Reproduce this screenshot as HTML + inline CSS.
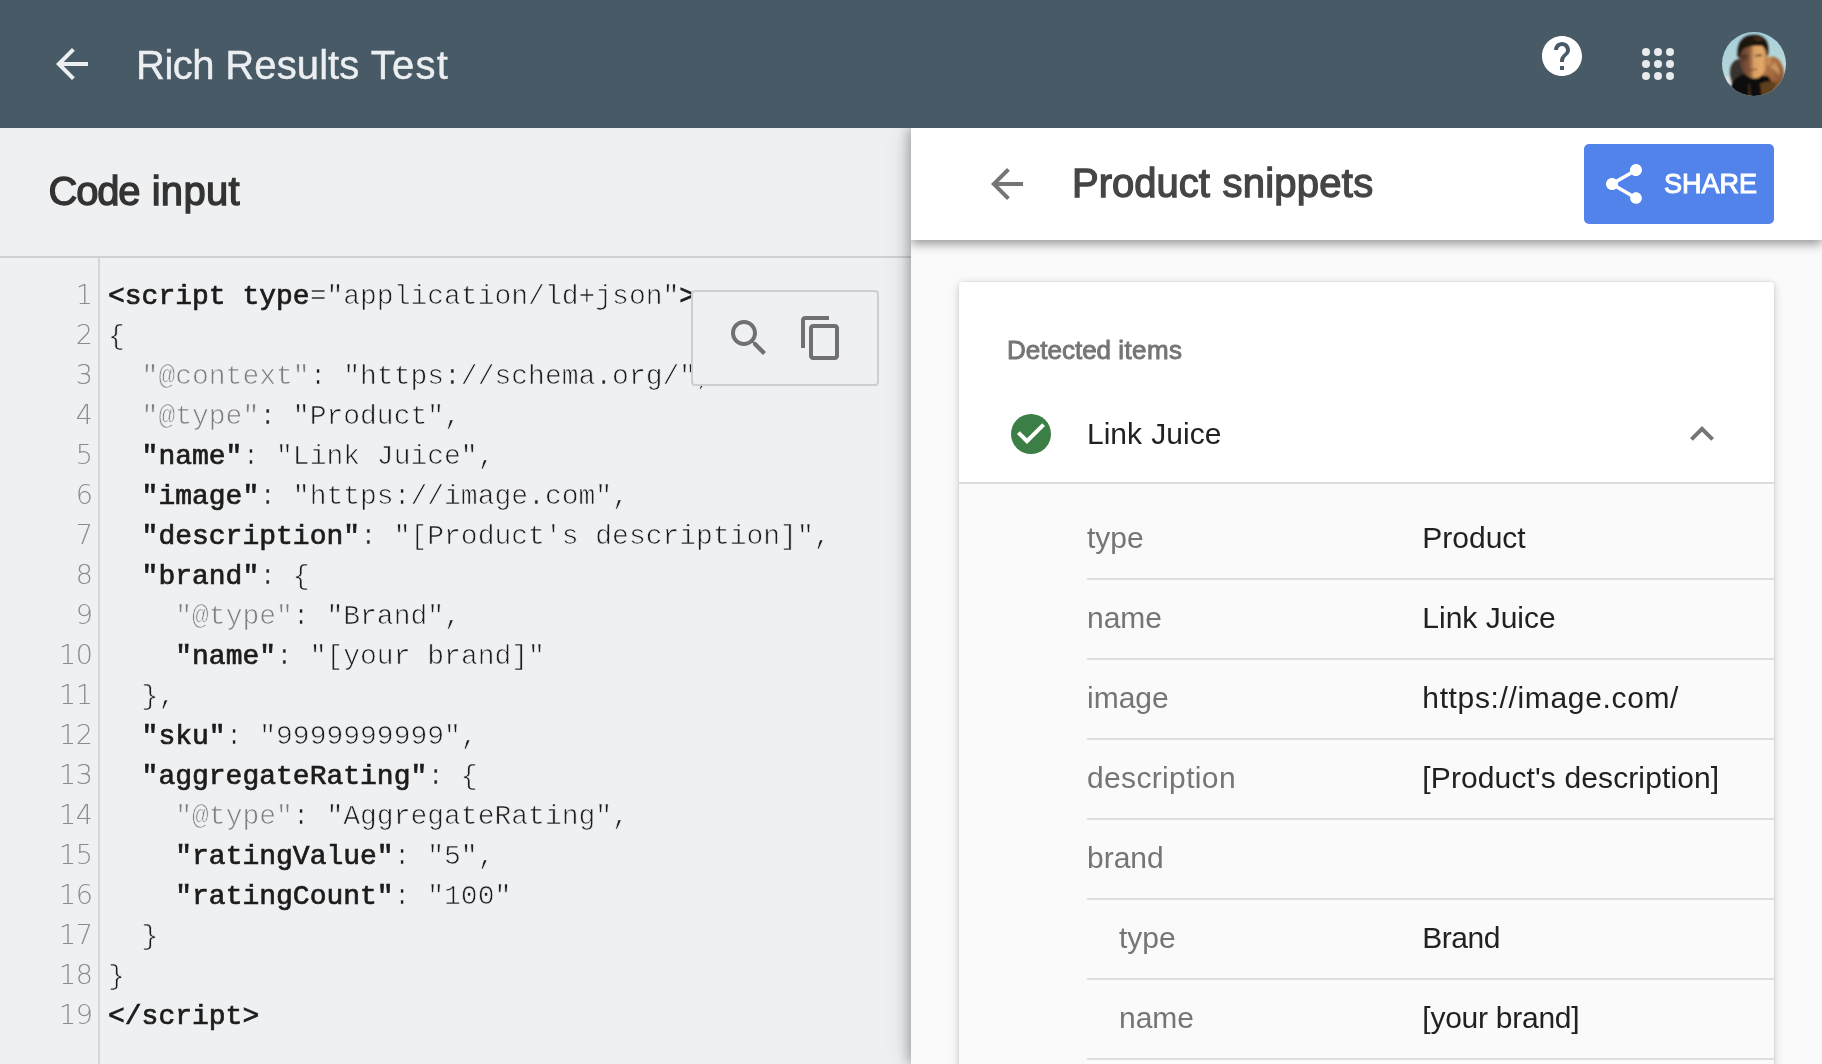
<!DOCTYPE html>
<html lang="en">
<head>
<meta charset="utf-8">
<title>Rich Results Test</title>
<style>
*{box-sizing:border-box;margin:0;padding:0}
html,body{width:1822px;height:1064px;overflow:hidden}
body{position:relative;background:#eff0f2;font-family:"Liberation Sans",Arial,sans-serif;color:#212121}
.abs{position:absolute}
svg{display:block}
/* top bar */
#top{will-change:transform;z-index:5;position:absolute;left:0;top:0;width:1822px;height:128px;background:#485a66}
#title{position:absolute;left:136px;top:42px;font-size:40px;line-height:46px;color:#eceff1;white-space:nowrap;letter-spacing:.2px;-webkit-text-stroke:.4px #eceff1}
/* left */
#left{will-change:transform;position:absolute;left:0;top:128px;width:911px;height:936px;background:#eff0f2}
#codeh{position:absolute;left:48.500px;top:40px;font-size:40px;line-height:46px;color:#333;white-space:nowrap;-webkit-text-stroke:1.3px #333}
#hline{position:absolute;left:0;top:128px;width:911px;height:2px;background:#cfd0d2}
#gline{position:absolute;left:98px;top:130px;width:2px;height:806px;background:#d6d7d9}
#code{position:absolute;left:0;top:149px;width:911px;font-family:"Liberation Mono","DejaVu Sans Mono",monospace;font-size:28px;line-height:40px;color:#1c1c1c;white-space:pre;-webkit-text-stroke:.7px #eff0f2}
#code .l{height:40px;position:relative}
#code .n{position:absolute;left:0;top:-2px;width:92.5px;-webkit-text-stroke:0;text-align:right;color:#8c8c8c;font-family:"DejaVu Sans Light","DejaVu Sans",sans-serif;font-weight:200;font-size:27px;letter-spacing:-.4px}
#code .c{position:absolute;left:108px;top:0}
#code b{font-weight:normal;color:#1c1c1c;-webkit-text-stroke:.7px #1c1c1c}
#code i{font-style:normal;color:#7d7d7d}
#tools{position:absolute;left:691px;top:162px;width:188px;height:96px;border:2px solid #cdced0;border-radius:4px;background:#eff0f2}
/* right */
#right{will-change:transform;overflow:hidden;position:absolute;left:911px;top:128px;width:911px;height:936px;background:#fafafa;box-shadow:-2px 0 12px rgba(0,0,0,.3),-6px 0 24px rgba(0,0,0,.1)}
#sub{position:absolute;left:0;top:0;width:911px;height:112px;background:#fff;box-shadow:0 4px 10px rgba(0,0,0,.4)}
#ptitle{position:absolute;left:161px;top:32px;font-size:40px;line-height:46px;color:#454545;white-space:nowrap;-webkit-text-stroke:1.3px #454545}
#share{position:absolute;left:673px;top:16px;width:190px;height:80px;border-radius:5px;background:#5183ea}
#share span{position:absolute;left:80px;top:23px;font-size:27px;line-height:34px;color:#fff;letter-spacing:0;-webkit-text-stroke:1px #fff}
#card{position:absolute;left:48px;top:154px;width:815px;height:800px;background:#fafafa;border-radius:4px 4px 0 0;box-shadow:0 2px 10px rgba(0,0,0,.2),0 0 2px rgba(0,0,0,.12);overflow:hidden}
#chead{position:absolute;left:0;top:0;width:815px;height:200px;background:#fff}
#det{position:absolute;left:48px;top:53px;font-size:26px;line-height:30px;color:#757575;white-space:nowrap;-webkit-text-stroke:.9px #757575}
#lj{position:absolute;left:128px;top:133px;font-size:30px;line-height:38px;word-spacing:1px;color:#212121;white-space:nowrap}
#cdiv{position:absolute;left:0;top:200px;width:815px;height:2px;background:#dcdcdc}
.row{position:absolute;left:128px;width:687px;height:80px;border-bottom:2px solid #dfdfdf;font-size:30px;line-height:34px}
.row .k{position:absolute;left:0;top:20.5px;color:#757575;white-space:nowrap}
.row .k.in{left:32px}
.row .v{position:absolute;left:335.300px;top:20.5px;color:#212121;white-space:nowrap}
</style>
</head>
<body>
<div id="top">
  <svg class="abs" style="left:48px;top:40px" width="48" height="48" viewBox="0 0 24 24"><path fill="#eceff1" d="M20 11H7.83l5.59-5.59L12 4l-8 8 8 8 1.41-1.41L7.83 13H20v-2z"/></svg>
  <div id="title"><span style="letter-spacing:-.5px">Rich</span> <span style="letter-spacing:.1px">Results</span> <span style="letter-spacing:1.2px">Test</span></div>
  <svg class="abs" style="left:1538px;top:32px" width="48" height="48" viewBox="0 0 24 24"><path fill="#fff" d="M12 2C6.48 2 2 6.48 2 12s4.48 10 10 10 10-4.480 10-10S17.520 2 12 2zm1 17h-2v-2h2v2zm2.070-7.750l-.9.920C13.450 12.900 13 13.500 13 15h-2v-.5c0-1.100.450-2.100 1.170-2.830l1.240-1.260c.370-.360.590-.860.590-1.410 0-1.100-.9-2-2-2s-2 .9-2 2H8c0-2.210 1.790-4 4-4s4 1.790 4 4c0 .880-.360 1.680-.930 2.250z"/></svg>
  <svg class="abs" style="left:1642px;top:48px" width="32" height="32" viewBox="0 0 32 32" fill="#e8eaed"><circle cx="4" cy="4" r="4"/><circle cx="16" cy="4" r="4"/><circle cx="28" cy="4" r="4"/><circle cx="4" cy="16" r="4"/><circle cx="16" cy="16" r="4"/><circle cx="28" cy="16" r="4"/><circle cx="4" cy="28" r="4"/><circle cx="16" cy="28" r="4"/><circle cx="28" cy="28" r="4"/></svg>
  <svg class="abs" id="avatar" style="left:1722px;top:32px" width="64" height="64" viewBox="0 0 64 64">
    <defs>
      <clipPath id="av"><circle cx="32" cy="32" r="32"/></clipPath>
      <linearGradient id="sky" x1="0" y1="0" x2="0.3" y2="1"><stop offset="0" stop-color="#a3cedb"/><stop offset=".6" stop-color="#b5d6da"/><stop offset="1" stop-color="#d3e2dc"/></linearGradient>
      <linearGradient id="face" x1="0" y1="0" x2="1" y2="0"><stop offset="0" stop-color="#54392d"/><stop offset=".38" stop-color="#8a5a3c"/><stop offset=".55" stop-color="#dca262"/><stop offset=".85" stop-color="#e3a868"/><stop offset="1" stop-color="#b97a48"/></linearGradient>
      <linearGradient id="furR" x1="0" y1="0" x2="1" y2="1"><stop offset="0" stop-color="#b9804e"/><stop offset=".5" stop-color="#a36a40"/><stop offset="1" stop-color="#6a4226"/></linearGradient>
      <filter id="bl" x="-10%" y="-10%" width="120%" height="120%"><feGaussianBlur stdDeviation="0.9"/></filter>
    </defs>
    <g clip-path="url(#av)">
      <rect width="64" height="64" fill="url(#sky)"/>
      <g filter="url(#bl)">
        <ellipse cx="6" cy="49" rx="3.500" ry="4" fill="#e2e2e0"/>
        <path d="M8.500 35 Q12 26 19 27 L24 40 L30 50 L12 56 Q6 46 8.500 35z" fill="#39322d"/>
        <path d="M44 27 Q52 21 58 29 Q66 42 58 55 L44 63 L36 50z" fill="url(#furR)"/>
        <path d="M52 30 Q58 34 58 44 Q54 38 48 36z" fill="#c8915c"/>
        <path d="M9 53 Q14 44 22 42 L46 44 Q54 54 50 66 L10 66z" fill="#0e0b09"/>
        <path d="M38 52 Q46 47 55 51 L50 62 L40 66z" fill="#61401f"/>
        <ellipse cx="46.500" cy="29" rx="2.600" ry="4.500" fill="#c88a54"/>
        <path d="M17 18 Q17 10 31 9 Q45 10 45 20 L45 32 Q44 41 37 45.500 Q31 48 25 44 Q18 38 17 28z" fill="url(#face)"/>
        <path d="M15.500 25 Q14 8 26 3.500 Q38 1 44 8 Q47.500 13 46 24 L44.500 23 Q44 17 40 14 Q30 13 23 16 Q18.500 18 18 25z" fill="#1c120d"/>
        <path d="M31 5.500 Q38 4 42.500 9 Q39 8 34 8.500z" fill="#4e2f1c"/>
        <path d="M19.500 24.500 L26 24 M33.500 23.800 L40 23.300" stroke="#2a1a12" stroke-width="1.400" fill="none"/>
        <path d="M20 27 Q23 28 26 27" stroke="#3a261c" stroke-width="1" fill="none"/>
        <path d="M26 37.500 Q30 38.600 35 37" stroke="#6a3c28" stroke-width="1.100" fill="none"/>
        <path d="M27 52 L27.500 64" stroke="#6a4224" stroke-width="1"/>
      </g>
    </g>
  </svg>
</div>

<div id="left">
  <div id="codeh"><span style="letter-spacing:-1.2px">Code</span><span style="letter-spacing:1.2px"> </span><span style="letter-spacing:.3px">input</span></div>
  <div id="hline"></div>
  <div id="gline"></div>
  <div id="code"><div class="l"><span class="n">1</span><span class="c"><b>&lt;script type</b>="application/ld+json"<b>&gt;</b></span></div><div class="l"><span class="n">2</span><span class="c">{</span></div><div class="l"><span class="n">3</span><span class="c">  <i>"@context"</i>: "https://schema.org/",</span></div><div class="l"><span class="n">4</span><span class="c">  <i>"@type"</i>: "Product",</span></div><div class="l"><span class="n">5</span><span class="c">  <b>"name"</b>: "Link Juice",</span></div><div class="l"><span class="n">6</span><span class="c">  <b>"image"</b>: "https://image.com",</span></div><div class="l"><span class="n">7</span><span class="c">  <b>"description"</b>: "[Product's description]",</span></div><div class="l"><span class="n">8</span><span class="c">  <b>"brand"</b>: {</span></div><div class="l"><span class="n">9</span><span class="c">    <i>"@type"</i>: "Brand",</span></div><div class="l"><span class="n">10</span><span class="c">    <b>"name"</b>: "[your brand]"</span></div><div class="l"><span class="n">11</span><span class="c">  },</span></div><div class="l"><span class="n">12</span><span class="c">  <b>"sku"</b>: "9999999999",</span></div><div class="l"><span class="n">13</span><span class="c">  <b>"aggregateRating"</b>: {</span></div><div class="l"><span class="n">14</span><span class="c">    <i>"@type"</i>: "AggregateRating",</span></div><div class="l"><span class="n">15</span><span class="c">    <b>"ratingValue"</b>: "5",</span></div><div class="l"><span class="n">16</span><span class="c">    <b>"ratingCount"</b>: "100"</span></div><div class="l"><span class="n">17</span><span class="c">  }</span></div><div class="l"><span class="n">18</span><span class="c">}</span></div><div class="l"><span class="n">19</span><span class="c"><b>&lt;/script&gt;</b></span></div></div>
  <div id="tools">
    <svg class="abs" style="left:32px;top:22px" width="48" height="48" viewBox="0 0 24 24"><path fill="#707072" d="M15.5 14h-.79l-.28-.27C15.410 12.590 16 11.110 16 9.500 16 5.910 13.090 3 9.500 3S3 5.910 3 9.500 5.910 16 9.500 16c1.610 0 3.090-.59 4.230-1.570l.27.28v.79l5 4.990L20.490 19l-4.990-5zm-6 0C7.010 14 5 11.990 5 9.500S7.010 5 9.500 5 14 7.010 14 9.500 11.990 14 9.500 14z"/></svg>
    <svg class="abs" style="left:104px;top:22px" width="48" height="48" viewBox="0 0 24 24"><path fill="#707072" d="M16 1H4c-1.100 0-2 .9-2 2v14h2V3h12V1zm3 4H8c-1.100 0-2 .9-2 2v14c0 1.100.9 2 2 2h11c1.100 0 2-.9 2-2V7c0-1.100-.9-2-2-2zm0 16H8V7h11v14z"/></svg>
  </div>
</div>

<div id="right">
  <div id="card">
    <div id="chead">
      <div id="det">Detected <span style="letter-spacing:.4px">items</span></div>
      <svg class="abs" style="left:48px;top:128px" width="48" height="48" viewBox="0 0 24 24"><circle cx="12" cy="12" r="10" fill="#3b7f47"/><path fill="#fff" d="M10 17l-5-5 1.410-1.410L10 14.170l7.590-7.590L19 8l-9 9z"/></svg>
      <div id="lj">Link Juice</div>
      <svg class="abs" style="left:719px;top:128px" width="48" height="48" viewBox="0 0 24 24"><path fill="#757575" d="M12 8l-6 6 1.410 1.410L12 10.830l4.590 4.580L18 14z"/></svg>
    </div>
    <div id="cdiv"></div>
    <div class="row" style="top:218px"><span class="k">type</span><span class="v">Product</span></div>
    <div class="row" style="top:298px"><span class="k">name</span><span class="v">Link Juice</span></div>
    <div class="row" style="top:378px"><span class="k">image</span><span class="v" style="letter-spacing:.65px">https://image.com/</span></div>
    <div class="row" style="top:458px"><span class="k" style="letter-spacing:.35px">description</span><span class="v" style="letter-spacing:.12px">[Product's description]</span></div>
    <div class="row" style="top:538px"><span class="k">brand</span><span class="v"></span></div>
    <div class="row" style="top:618px"><span class="k in">type</span><span class="v" style="letter-spacing:-.5px">Brand</span></div>
    <div class="row" style="top:698px"><span class="k in">name</span><span class="v" style="letter-spacing:-.25px">[your brand]</span></div>
    <div class="row" style="top:778px"><span class="k">sku</span><span class="v">9999999999</span></div>
  </div>
  <div id="sub">
    <svg class="abs" style="left:72px;top:32px" width="48" height="48" viewBox="0 0 24 24"><path fill="#757575" d="M20 11H7.83l5.59-5.59L12 4l-8 8 8 8 1.410-1.410L7.830 13H20v-2z"/></svg>
    <div id="ptitle">Product<span style="letter-spacing:1.5px"> </span><span style="letter-spacing:.25px">snippets</span></div>
    <div id="share">
      <svg class="abs" style="left:16px;top:16px" width="48" height="48" viewBox="0 0 24 24"><path fill="#fff" d="M18 16.080c-.76 0-1.440.3-1.960.770L8.910 12.700c.05-.23.090-.46.090-.7s-.04-.47-.09-.7l7.050-4.110c.54.5 1.250.81 2.040.81 1.660 0 3-1.340 3-3s-1.340-3-3-3-3 1.340-3 3c0 .24.04.47.09.7L8.040 9.810C7.500 9.310 6.790 9 6 9c-1.660 0-3 1.340-3 3s1.340 3 3 3c.79 0 1.500-.31 2.040-.81l7.120 4.160c-.05.21-.08.43-.08.650 0 1.610 1.310 2.920 2.920 2.920 1.610 0 2.920-1.310 2.920-2.920s-1.310-2.920-2.920-2.920z"/></svg>
      <span>SHARE</span>
    </div>
  </div>
</div>
</body>
</html>
